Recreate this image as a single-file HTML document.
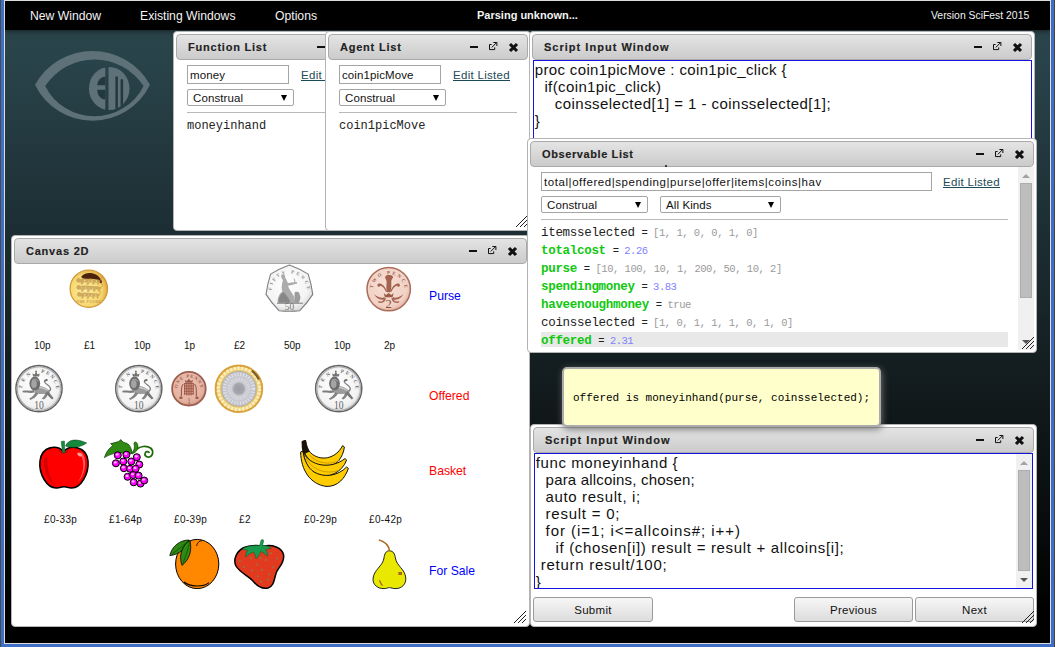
<!DOCTYPE html>
<html>
<head>
<meta charset="utf-8">
<title>JS-Eden</title>
<style>
*{box-sizing:border-box;margin:0;padding:0}
html,body{width:1059px;height:647px;overflow:hidden;background:#fff}
body{position:relative;font-family:"Liberation Sans",sans-serif;font-size:11.5px;color:#222}
#frame{position:absolute;left:0;top:0;width:1055px;height:647px;background:#3f6ec6;border-left:1px solid #4a4a4a;border-right:1px solid #444}
#frame i{position:absolute;left:3px;top:0;width:1047px;height:644px;background:#ddd}
#desk{position:absolute;left:5px;top:1px;width:1045px;height:642px;background:linear-gradient(#2a444a 0,#29434a 60px,#1c2e33 230px,#131c1e 380px,#050707 560px,#000 610px);overflow:hidden}
#menubar{position:absolute;left:0;top:0;width:1045px;height:29px;box-shadow:0 1px 5px rgba(0,0,0,.55);background:#000;color:#f2f2f2;font-size:12.2px}
#menubar span{position:absolute;top:8px;white-space:nowrap}
.win{position:absolute;background:#fff;border:1px solid #b4b4b4;border-radius:4px;overflow:hidden}
.tb{position:absolute;left:2px;top:2px;right:2px;height:26px;border:1px solid #aaa;border-radius:4px;background:linear-gradient(#e4e4e4,#cbcbcb)}
.tb b{position:absolute;left:11px;top:6px;font-size:11px;letter-spacing:.78px;color:#222;white-space:nowrap;-webkit-text-stroke:.15px #222}
.tb svg{position:absolute;top:0;right:0}
.inp{position:absolute;height:19px;border:1px solid #a5a5a5;background:#fff;font-size:11.5px;letter-spacing:.1px;padding:3px 0 0 2px;white-space:nowrap;overflow:hidden;color:#111}
.sel{position:absolute;height:17px;border:1px solid #a5a5a5;border-radius:2px;background:#fff;font-size:11.5px;letter-spacing:.1px;padding:2px 0 0 5px;white-space:nowrap;color:#111}
.sel:after{content:"";position:absolute;right:6px;top:5px;border:3.5px solid transparent;border-top:6px solid #000;border-bottom:0}
.lnk{position:absolute;font-size:11.5px;letter-spacing:.3px;color:#1b4a58;text-decoration:underline;white-space:nowrap}
.hr{position:absolute;height:1px;background:#b9b9b9}
.mono{font-family:"Liberation Mono",monospace}
.ta{position:absolute;border:1px solid #1414e0;background:#fff;font-size:15px;line-height:17px;white-space:pre;color:#111;overflow:hidden}
.ta div{height:17px}
.btn{position:absolute;height:25px;border:1px solid #9a9a9a;border-radius:3px;background:linear-gradient(#f7f7f7,#dcdcdc);font-size:11.5px;letter-spacing:.3px;text-align:center;padding-top:6px;color:#111}
#wins{position:absolute;left:0;top:0;width:1050px;height:643px;overflow:hidden}
#tip{position:absolute;left:562px;top:367px;width:319px;height:59.5px;background:#ffffcc;border:2px solid #ababab;border-radius:5px;box-shadow:1px 2px 7px #707070;font-size:11px;padding:23px 0 0 9px;color:#000;white-space:pre}
.grip{position:absolute;right:2px;bottom:2px}
.sb{position:absolute;width:16px;background:#f0f0f0}
.sb i{position:absolute;left:2px;width:12px;background:#bdbdbd;border:1px solid #adadad}
.sb:before{content:"";position:absolute;left:4px;top:7px;border:4px solid transparent;border-bottom:4px solid #a3a3a3;border-top:0}
.sb.dn:after{content:"";position:absolute;left:4px;bottom:6px;border:4px solid transparent;border-top:4px solid #555;border-bottom:0}
.row{position:absolute;left:13px;height:15px;font-family:"Liberation Mono",monospace;font-size:10.5px;letter-spacing:-.48px;white-space:pre;color:#222}
.row s,.row b{text-decoration:none;font-size:12.5px;letter-spacing:-.3px;margin-right:1px}
.row b{color:#0fc80f}
.row u{text-decoration:none;color:#9a9a9a}
.row u.n{color:#8080ff}
.cl{position:absolute;font-size:10px;color:#111;white-space:nowrap}
.cz{position:absolute;left:417px;font-size:12.2px;white-space:nowrap}
</style>
</head>
<body>
<svg width="0" height="0" style="position:absolute">
<defs>
<g id="tbi">
 <rect x="4" y="12" width="8" height="2" fill="#111"/>
 <path d="M25.6 10.5H23.5V15.6H28.7V13.4" fill="none" stroke="#111" stroke-width="1"/>
 <path d="M25.8 13.4L30.6 8.6M27.4 8.5H30.9V12" fill="none" stroke="#111" stroke-width="1"/>
 <path d="M44 10L51 17M51 10L44 17" stroke="#111" stroke-width="3.1" stroke-linecap="butt"/>
</g>
<g id="grip" shape-rendering="crispEdges">
 <path d="M0.5 12.5L12.5 0.5M4.5 12.5L12.5 4.5M8.5 12.5L12.5 8.5" stroke="#222" stroke-width="1"/>
</g>
</defs>
</svg>
<div id="frame"><i></i></div>
<div id="desk">
<svg id="logo" width="130" height="80" viewBox="30 46 130 80" style="position:absolute;left:25px;top:45px">
<defs><clipPath id="cpe"><ellipse cx="109.2" cy="88.5" rx="20.3" ry="21.6"/></clipPath></defs>
<path fill="#5e7178" fill-rule="evenodd" d="M35 84.8 A65.7 65.7 0 0 1 150 84.8 A64 64 0 0 1 35 84.8Z M45.2 85.9 A59 59 0 0 1 143.6 85.9 A55 55 0 0 1 45.2 85.9Z"/>
<g clip-path="url(#cpe)">
<rect x="86" y="64" width="19.3" height="50" fill="#5e7178"/>
<rect x="108.5" y="64" width="24" height="50" fill="#5e7178"/>
<path fill="#22393f" d="M105.3 76.7A8 8.6 0 0 0 97.2 85.3H105.3Z M105.3 89.7H97.2A8 9.9 0 0 0 105.3 99.6Z"/>
<rect x="115.4" y="76.5" width="2.5" height="40" fill="#22393f"/>
<rect x="120.6" y="79.3" width="2.5" height="40" fill="#22393f"/>
</g>
</svg>
 <div id="menubar">
  <span style="left:25px">New Window</span>
  <span style="left:135px">Existing Windows</span>
  <span style="left:270px">Options</span>
  <span style="left:472px;font-weight:bold;font-size:11px;top:8px">Parsing unknown...</span>
  <span style="left:926px;font-size:10.4px;top:9px">Version SciFest 2015</span>
 </div>
</div>
<div id="wins">
<!--W1 Function List-->
<div class="win" style="left:173px;top:31px;width:205px;height:200px">
 <div class="tb"><b>Function List</b><svg width="62" height="26" style="right:-1px;top:-1px"><use href="#tbi"/></svg></div>
 <div class="inp" style="left:13px;top:33px;width:102px">money</div>
 <div class="lnk" style="left:127px;top:37px">Edit Listed</div>
 <div class="sel" style="left:13px;top:57px;width:107px">Construal</div>
 <div class="hr" style="left:13px;top:80px;width:180px"></div>
 <div class="mono" style="position:absolute;left:13px;top:87px;font-size:12px">moneyinhand</div>
</div>
<!--W2 Agent List-->
<div class="win" style="left:325px;top:31px;width:206px;height:200px">
 <div class="tb"><b>Agent List</b><svg width="62" height="26" style="right:-1px;top:-1px"><use href="#tbi"/></svg></div>
 <div class="inp" style="left:13px;top:33px;width:102px">coin1picMove</div>
 <div class="lnk" style="left:127px;top:37px">Edit Listed</div>
 <div class="sel" style="left:13px;top:57px;width:107px">Construal</div>
 <div class="hr" style="left:13px;top:80px;width:178px"></div>
 <div class="mono" style="position:absolute;left:13px;top:87px;font-size:12px">coin1picMove</div>
 <svg class="grip" width="13" height="13"><use href="#grip"/></svg>
</div>
<!--W3 Script Input top-->
<div class="win" style="left:529px;top:31px;width:506px;height:130px">
 <div class="tb"><b style="letter-spacing:1.02px">Script Input Window</b><svg width="62" height="26" style="right:-1px;top:-1px"><use href="#tbi"/></svg></div>
 <div class="ta" style="left:3px;top:28px;width:499px;height:110px"><div style="padding-left:0.7px;letter-spacing:0.358px">proc coin1picMove : coin1pic_click {</div><div style="padding-left:10.4px;letter-spacing:0.386px">if(coin1pic_click)</div><div style="padding-left:20.8px;letter-spacing:0.454px">coinsselected[1] = 1 - coinsselected[1];</div><div style="padding-left:0.7px;letter-spacing:0.000px">}</div></div>
</div>
<!--W5 Canvas 2D-->
<div class="win" id="w5" style="left:11px;top:235px;width:519px;height:392px">
 <div class="tb"><b>Canvas 2D</b><svg width="62" height="26" style="right:-1px;top:-1px"><use href="#tbi"/></svg></div>
<svg id="cv" width="517" height="363" viewBox="12 263 517 363" style="position:absolute;left:0;top:27px">
<defs>
<radialGradient id="gSil" cx="45%" cy="42%" r="62%"><stop offset="0" stop-color="#ffffff"/><stop offset=".75" stop-color="#f3f3f3"/><stop offset="1" stop-color="#d6d6d6"/></radialGradient>
<radialGradient id="gCop1" cx="45%" cy="40%" r="65%"><stop offset="0" stop-color="#ecc3b3"/><stop offset=".75" stop-color="#e4b1a0"/><stop offset="1" stop-color="#cf917f"/></radialGradient>
<radialGradient id="gCop" cx="45%" cy="42%" r="62%"><stop offset="0" stop-color="#f7dfd4"/><stop offset=".78" stop-color="#f1d1c4"/><stop offset="1" stop-color="#dcab98"/></radialGradient>
<radialGradient id="gGold" cx="42%" cy="55%" r="60%"><stop offset="0" stop-color="#fdeea0"/><stop offset=".7" stop-color="#f7d870"/><stop offset="1" stop-color="#e0a63c"/></radialGradient>
<radialGradient id="gS2" cx="50%" cy="50%" r="50%"><stop offset="0" stop-color="#9c9ca4"/><stop offset=".3" stop-color="#a6a6ae"/><stop offset=".42" stop-color="#cfcfd6"/><stop offset="1" stop-color="#c0c0c8"/></radialGradient>
<path id="a185" d="M-17 1A17 17 0 0 1 17 1"/>
<path id="a135" d="M-11.6 .5A11.6 11.6 0 0 1 11.6 .5"/>
<path id="a175" d="M-16 1A16 16 0 0 1 16 1"/>
<path id="a190" d="M-17.8 2A17.8 17.8 0 0 1 17.8 2"/>
<!-- 10p -->
<g id="c10">
 <circle r="23.1" fill="url(#gSil)" stroke="#646464" stroke-width="1.5"/>
 <circle r="21.7" fill="none" stroke="#a9a9a9" stroke-width="1.4"/>
 <circle r="20.9" fill="none" stroke="#e2e2e2" stroke-width=".7"/>
 <text font-family="Liberation Serif" font-weight="bold" font-size="5" fill="#6e6e6e"><textPath href="#a185" startOffset="1" textLength="17" lengthAdjust="spacing">TEN</textPath></text><text font-family="Liberation Serif" font-weight="bold" font-size="5" fill="#6e6e6e"><textPath href="#a185" startOffset="28.5" textLength="24" lengthAdjust="spacing">PENCE</textPath></text>
 <!-- crown -->
 <path d="M-5.8 -12L-6.6 -15L-4.4 -14.2L-2.9 -17.3L-1.4 -14.2L0.8 -15L0 -12Z" fill="#727272"/>
 <circle cx="-2.9" cy="-17.2" r=".9" fill="#727272"/>
 <!-- body -->
 <path d="M-1 -2.6C3 -2.8 7 -1 10.4 2C11.6 3.6 10.6 5.4 8.6 5.2C5 4.6 1 6 -3.4 5C-5.6 4 -5 -1 -1 -2.6Z" fill="#9c9c9c"/>
 <path d="M0 -1C3 -1 6 0 8.6 2" fill="none" stroke="#dcdcdc" stroke-width="1"/>
 <!-- mane/head -->
 <ellipse cx="-4.2" cy="-5" rx="5.4" ry="7" fill="#6e6e6e"/>
 <ellipse cx="-5" cy="-4.6" rx="2.8" ry="4" fill="#a4a4a4"/>
 <path d="M-7 -8C-5 -10 -2 -9.6 -1 -7" fill="none" stroke="#bdbdbd" stroke-width=".8"/>
 <!-- legs -->
 <path d="M-5 1.4C-9 2.8 -12 1.6 -16.2 2.2L-16.6 3.6C-12 3.8 -9 4.8 -4.6 4Z" fill="#7c7c7c"/>
 <path d="M-3.4 3.6C-5 6.6 -7 8.6 -9.8 10L-8.6 11.4C-5.4 10.2 -2.4 8 -0.6 5Z" fill="#828282"/>
 <path d="M6.4 4C6 6.6 4.6 8.4 2.8 10L4.6 11C6.8 9.6 8.6 7.4 9.2 4.8Z" fill="#828282"/>
 <path d="M8.6 2.4C11 4.6 12.6 7 14.6 9.6L13 10.8C10.6 8.6 8.6 6.6 7 4.8Z" fill="#767676"/>
 <!-- tail -->
 <path d="M10.2 2.6C13.4 0.4 10.4 -2.6 7.8 -4.4C5.8 -5.8 5 -7.2 5.8 -8" fill="none" stroke="#7a7a7a" stroke-width="1.2"/>
 <ellipse cx="7" cy="-8.3" rx="1.9" ry="1.1" fill="#6c6c6c" transform="rotate(-15 7 -8.3)"/>
 <text y="20.6" text-anchor="middle" font-family="Liberation Serif" font-size="12.3" fill="#646464" textLength="9.6" lengthAdjust="spacingAndGlyphs">10</text>
</g>
<!-- 1p -->
<g id="c1">
 <circle r="16.8" fill="url(#gCop1)" stroke="#9c5e50" stroke-width="1.8"/>
 <text font-family="Liberation Serif" font-weight="bold" font-size="4.6" fill="#9c5e50"><textPath href="#a135" startOffset="1" textLength="34" lengthAdjust="spacing">ONE PENNY</textPath></text>
 <path d="M-3.5 -6L-4 -8.6L-2 -7.6L0 -10L2 -7.6L4 -8.6L3.5 -6Z" fill="#9c5c4c"/>
 <rect x="-4.6" y="-5.6" width="9.2" height="11.4" fill="#d89c8a"/>
 <path d="M-4.4 -5.5V6M-2.2 -5.5V6.8M0 -5.5V7M2.2 -5.5V6.8M4.4 -5.5V6M-4.6 -5.2H4.6M-4.6 -2.6H4.6M-4.6 0H4.6M-4.6 2.6H4.6M-4.6 5.2H4.6" stroke="#9a5848" stroke-width=".9" fill="none"/>
 <path d="M-5.5 -4.5C-8.5 -3 -7 4 -7.6 7.5M5.5 -4.5C8.5 -3 7 4 7.6 7.5" stroke="#9a5848" stroke-width="1.1" fill="none"/>
 <ellipse cx="-8" cy="9" rx="1.7" ry="1.2" fill="#9a5848"/><ellipse cx="8" cy="9" rx="1.7" ry="1.2" fill="#9a5848"/>
 <text y="15" text-anchor="middle" font-family="Liberation Serif" font-size="8" fill="#a06454">1</text>
</g>
<!-- 2p -->
<g id="c2">
 <circle r="21.7" fill="url(#gCop)" stroke="#aa6b5b" stroke-width="1.5"/>
 <text font-family="Liberation Serif" font-weight="bold" font-size="4.8" fill="#9c5e50"><textPath href="#a175" startOffset="2" textLength="46" lengthAdjust="spacing">TWO PENCE</textPath></text>
 <!-- centre plume -->
 <path d="M-3.4 -12.5C-2 -14.5 3.5 -14.5 4.3 -12.3C4.6 -10.8 2.8 -10 2.6 -8C2.4 -4 3.2 0 1.6 3.2H-1.6C-3 0 -1.8 -5 -2.2 -8C-2.4 -10 -4.2 -10.8 -3.4 -12.5Z" fill="#a36350"/>
 <!-- side plumes -->
 <path d="M-1.6 2.5C-3 -1 -5 -4.6 -8.6 -5.6C-11.6 -6.2 -12.2 -3 -10 -2.4C-8.6 -2.2 -8.4 -3.6 -7.4 -3.2C-4.8 -2 -3.6 0.6 -2.6 3Z" fill="#a36350"/>
 <path d="M1.6 2.5C3 -1 5 -4.6 8.6 -5.6C11.6 -6.2 12.2 -3 10 -2.4C8.6 -2.2 8.4 -3.6 7.4 -3.2C4.8 -2 3.6 0.6 2.6 3Z" fill="#a36350"/>
 <!-- crown band -->
 <path d="M-5 4L-3.8 8.2H3.8L5 4L2.6 5.8L0 3.8L-2.6 5.8Z" fill="#9a5a48"/>
 <!-- ribbons -->
 <path d="M-4 8C-7 9.5 -11 8 -14.6 5.2C-13 8.6 -9 11.5 -4.4 10.4Z" fill="#a36350"/>
 <path d="M4 8C7 9.5 11 8 14.6 5.2C13 8.6 9 11.5 4.4 10.4Z" fill="#a36350"/>
 <path d="M-3.4 9C-4 12 -7 14.4 -10.4 12.6M3.4 9C4 12 7 14.4 10.4 12.6" stroke="#a36350" stroke-width="1.5" fill="none"/>
 <text y="19.4" text-anchor="middle" font-family="Liberation Serif" font-size="12.6" fill="#8e4e3c">2</text>
</g>
<!-- gold £1 -->
<g id="cg1">
 <circle r="18.7" fill="url(#gGold)" stroke="#cf9636" stroke-width="1.2"/>
 <path d="M-7 -12.6C-2.5 -17.6 8.6 -16.6 12.8 -8.2C13.6 -6 12.6 -4.6 11.4 -5.8C8.8 -9.4 4 -10.6 -0.6 -9.8C-4.4 -9.2 -8.6 -10.6 -7 -12.6Z" fill="#4d230c"/>
 <defs><g id="ln"><path d="M-9.5 -1.2C-6 -2.4 -2 -2.2 2 -1.6C5 -1.2 8 -1.6 9.6 -0.6C10.6 0.4 9.6 1.4 8 1.2C5 0.8 2 1.4 -2 1.2C-5 1 -8 1.6 -9.5 0.8Z"/><circle cx="-9.6" cy="-0.6" r="1.9"/><path d="M-7 1L-7.6 2.8H-5.8L-5 1ZM-2 1.2L-2.4 2.9H-0.6L0 1.2ZM3 1L2.8 2.8H4.6L5 1ZM7 1L7.2 2.8H9L8.6 1Z"/><path d="M9.4 -0.6C11.4 -1.6 11.6 -3 10 -3.2" fill="none" stroke="#c59a50" stroke-width=".8"/></g></defs>
 <g fill="#c9a056" opacity=".85">
  <use href="#ln" transform="translate(0.4 -7.6) scale(1.12 1.25)"/><use href="#ln" transform="translate(1 -0.6) scale(1.16 1.25)"/><use href="#ln" transform="translate(0.4 6.4) scale(1.05 1.25)"/>
 </g>
 <g fill="#fbe99c" opacity=".9"><circle cx="-4" cy="-8" r=".7"/><circle cx="3" cy="-7.6" r=".7"/><circle cx="-3" cy="-0.8" r=".7"/><circle cx="4" cy="-0.6" r=".7"/><circle cx="-4" cy="6.2" r=".7"/><circle cx="3" cy="6.4" r=".7"/><circle cx="7.6" cy="-7.8" r=".6"/><circle cx="-7" cy="-0.8" r=".6"/><circle cx="7" cy="6.2" r=".6"/><circle cx="0" cy="-7.8" r=".5"/><circle cx="0.6" cy="-0.6" r=".5"/><circle cx="-0.4" cy="6.3" r=".5"/></g>
 <text font-family="Liberation Sans" font-weight="bold" font-size="3.4" fill="#caa050" text-anchor="middle" y="14.8" letter-spacing=".5">ONE POUND</text>
</g>
<!-- £2 -->
<g id="cp2">
 <circle r="23.2" fill="#f0d68a" stroke="#d9a23e" stroke-width="2.2"/>
 <circle r="20.6" fill="none" stroke="#fbefb8" stroke-width="3.4" stroke-dasharray="2.2 1.6"/>
 <circle r="18.2" fill="none" stroke="#e6c36a" stroke-width="1.2"/>
 <path d="M13.6 -18.8A23.2 23.2 0 0 1 21 -9.8L19 -8.8A21 21 0 0 0 12.4 -17Z" fill="#7a5c26"/>
 <circle r="17.3" fill="url(#gS2)"/>
 <circle r="14.6" fill="none" stroke="#e4e4ea" stroke-width="3.6" stroke-dasharray="1.4 1.5" opacity=".8"/>
 <circle r="10" fill="none" stroke="#dcdce4" stroke-width="2.6" stroke-dasharray="1.2 1.4" opacity=".8"/>
 <circle r="17.3" fill="none" stroke="#a8a8b0" stroke-width=".8"/>
</g>
<!-- 50p -->
<g id="c50">
 <path d="M0.0 -24.0Q9.8 -20.4 18.8 -15.0Q22.0 -5.0 23.4 5.3Q17.7 14.1 10.4 21.6Q0.0 22.6 -10.4 21.6Q-17.7 14.1 -23.4 5.3Q-22.0 -5.0 -18.8 -15.0Q-9.8 -20.4 -0.0 -24.0Z" fill="url(#gSil)" stroke="#7e7e7e" stroke-width="1.1" stroke-linejoin="round"/>
 <text font-family="Liberation Serif" font-weight="bold" font-size="4.6" fill="#858585"><textPath href="#a190" startOffset="1" textLength="53" lengthAdjust="spacing">FIFTY PENCE</textPath></text>
 <!-- Britannia -->
 <path d="M-8 -14.4C-5.6 -16 -3.4 -13.6 -4.4 -11.6C-2 -9 -2.6 -6.6 -1 -6C2 -6.4 5 -7.6 7.6 -7L7.8 -5.6C5 -5 2 -3.6 -1.4 -3.4C-0.6 0 3 4 5 8L6 13.6H-11.6C-12.4 9 -10 4.6 -7 2.4C-8.4 -1 -7.6 -5 -6.4 -9C-7.6 -10.6 -8.8 -12.6 -8 -14.4Z" fill="#ababab"/>
 <path d="M-6 3C-3 6 0 10 1 13.4H-10.8C-11 9 -9 5 -6 3Z" fill="#878787"/>
 <path d="M5.4 3.2C7.6 2 10.6 3 10.2 5.6C12 8 10.4 11.4 9.4 13.6H5.6C6 10 4.4 6 5.4 3.2Z" fill="#9c9c9c"/>
 <path d="M4.6 -10.6L5.8 -6.6" stroke="#aaa" stroke-width="1"/>
 <path d="M-12.4 14.1H13.4" stroke="#6a6a6a" stroke-width=".9"/>
 <text y="21.3" text-anchor="middle" font-family="Liberation Serif" font-size="9.4" fill="#747474">50</text>
</g>
</defs>
<!-- purse row -->
<use href="#cg1" x="88.8" y="288.7"/>
<use href="#c50" x="289.4" y="289.1"/>
<use href="#c2" x="388.7" y="289.1"/>
<!-- offered row -->
<use href="#c10" x="39" y="388.6"/>
<use href="#c10" x="138.8" y="388.6"/>
<use href="#c1" x="188.9" y="388.7"/>
<use href="#cp2" x="238.9" y="388.8"/>
<use href="#c10" x="338.7" y="388.6"/>

<!-- apple -->
<g>
 <path d="M63.6 451.5C57 444.6 42 445.6 40 461C38.6 474 47 488.4 56.6 488C60.4 487.8 61.6 486.6 64 486.8C66.4 486.6 68 488 71.6 488C81 488 89 474 88 461C86.6 446 70.6 444.4 63.6 451.5Z" fill="#f00" stroke="#000" stroke-width="1.6"/>
 <path d="M44 458C43 470 48 482 56 485.6C50 479 46.6 469 47.4 456.4Z" fill="#d40000"/>
 <path d="M79 453C84.6 458 85 472 78 482C86 474 87.4 458 81.6 452.4Z" fill="#ff5a5a"/>
 <ellipse cx="79.6" cy="454.6" rx="2.6" ry="1.6" fill="#ff9a9a" transform="rotate(35 79.6 454.6)"/>
 <path d="M58.6 450.4C61.4 453.6 66 453.6 68.4 450.6" fill="none" stroke="#b00000" stroke-width="1.2"/>
 <path d="M61.2 441.4L64.4 441L65 452.6L62.6 452.8Z" fill="#168a3c" stroke="#0a5a24" stroke-width=".5"/>
 <path d="M65.6 446C68 439.6 76 438 86.6 443C80 447.6 72 448.4 65.6 446Z" fill="#168a3c" stroke="#0a4a1c" stroke-width=".6"/>
</g>
<!-- grapes -->
<g>
 <path d="M104.4 457.6C107 450 110 448 112.6 445.6L110.6 443.6C114 443 116 442.4 118.6 441.6L121 439.6C122 442 124 442.6 127 443.4C130 445 132 449 131.6 453L127 456C123 451.6 117 452.4 113.6 453.6C110 454.6 107 456 104.4 457.6Z" fill="#2e8a12" stroke="#0a3a04" stroke-width=".7"/>
 <path d="M132 454C137 452 139.6 448 137 443C135.6 441 133.6 442 134 444C135 448 134 451 131 453Z" fill="#2e8a12" stroke="#0a3a04" stroke-width=".6"/>
 <path d="M137 449C140 446.6 146 445 150.6 448C154 451 153 456 149.4 457C146 457.6 144 455 145.4 452.6C146.6 451 149 451.4 149.4 453" fill="none" stroke="#1e6a0a" stroke-width="1.7"/>
 <circle cx="117.8" cy="455.3" r="3.5" fill="#f0f" stroke="#000" stroke-width="1"/><ellipse cx="117.2" cy="454.4" rx="1.5" ry="1.2" fill="#ffb0ff"/><circle cx="126.4" cy="454.7" r="3.5" fill="#f0f" stroke="#000" stroke-width="1"/><ellipse cx="125.8" cy="453.8" rx="1.5" ry="1.2" fill="#ffb0ff"/><circle cx="136.8" cy="457.2" r="3.5" fill="#f0f" stroke="#000" stroke-width="1"/><ellipse cx="136.2" cy="456.3" rx="1.5" ry="1.2" fill="#ffb0ff"/><circle cx="115.9" cy="463.3" r="3.5" fill="#f0f" stroke="#000" stroke-width="1"/><ellipse cx="115.3" cy="462.4" rx="1.5" ry="1.2" fill="#ffb0ff"/><circle cx="123.3" cy="461.5" r="3.5" fill="#f0f" stroke="#000" stroke-width="1"/><ellipse cx="122.7" cy="460.6" rx="1.5" ry="1.2" fill="#ffb0ff"/><circle cx="131.3" cy="461.5" r="3.5" fill="#f0f" stroke="#000" stroke-width="1"/><ellipse cx="130.7" cy="460.6" rx="1.5" ry="1.2" fill="#ffb0ff"/><circle cx="139.3" cy="464.5" r="3.5" fill="#f0f" stroke="#000" stroke-width="1"/><ellipse cx="138.7" cy="463.6" rx="1.5" ry="1.2" fill="#ffb0ff"/><circle cx="123.9" cy="468.2" r="3.5" fill="#f0f" stroke="#000" stroke-width="1"/><ellipse cx="123.3" cy="467.3" rx="1.5" ry="1.2" fill="#ffb0ff"/><circle cx="130.0" cy="468.8" r="3.5" fill="#f0f" stroke="#000" stroke-width="1"/><ellipse cx="129.4" cy="467.9" rx="1.5" ry="1.2" fill="#ffb0ff"/><circle cx="135.6" cy="468.8" r="3.5" fill="#f0f" stroke="#000" stroke-width="1"/><ellipse cx="135.0" cy="467.9" rx="1.5" ry="1.2" fill="#ffb0ff"/><circle cx="127.6" cy="476.8" r="3.5" fill="#f0f" stroke="#000" stroke-width="1"/><ellipse cx="127.0" cy="475.9" rx="1.5" ry="1.2" fill="#ffb0ff"/><circle cx="133.1" cy="475.0" r="3.5" fill="#f0f" stroke="#000" stroke-width="1"/><ellipse cx="132.5" cy="474.1" rx="1.5" ry="1.2" fill="#ffb0ff"/><circle cx="138.6" cy="475.6" r="3.5" fill="#f0f" stroke="#000" stroke-width="1"/><ellipse cx="138.0" cy="474.7" rx="1.5" ry="1.2" fill="#ffb0ff"/><circle cx="133.7" cy="482.3" r="3.5" fill="#f0f" stroke="#000" stroke-width="1"/><ellipse cx="133.1" cy="481.4" rx="1.5" ry="1.2" fill="#ffb0ff"/><circle cx="140.5" cy="483.6" r="3.5" fill="#f0f" stroke="#000" stroke-width="1"/><ellipse cx="139.9" cy="482.7" rx="1.5" ry="1.2" fill="#ffb0ff"/><circle cx="144.2" cy="480.5" r="3.5" fill="#f0f" stroke="#000" stroke-width="1"/><ellipse cx="143.6" cy="479.6" rx="1.5" ry="1.2" fill="#ffb0ff"/>
</g>
<!-- banana -->
<g stroke="#111" stroke-width="1" fill="#fc0">
 <path d="M302 441.6L305.6 440.4C306.4 446 308 450 310.4 452.6C320 462 336 459 342.6 445.6L344.4 447C343 458 336 466 326 468C316 468 308 460 304 452Z"/>
 <path d="M303 452C310 466 330 470 345 458.6L346.6 460C342 473 328 478 318 476C310 473 305 464 303 452Z"/>
 <path d="M300.6 452C301 470 310 484 326 486.4C338 487 345 478 348.4 468.4L346.6 467C338 476 324 478 314 472C308 468 304 460 303 451Z"/>
 <path d="M302 441L305.8 440C306.6 445 307.6 448.6 309.6 451.6L303.4 454.6C301.6 450 301.4 445 302 441Z" fill="#1a1208" stroke="none"/>
</g>
<path d="M306 458C312 470 326 474.6 338 470.6M309 454.6C316 463 330 466 340 460" fill="none" stroke="#c89600" stroke-width=".9"/>
<!-- orange -->
<g>
 <ellipse cx="197.2" cy="564" rx="21.6" ry="24.6" fill="#f80" stroke="#000" stroke-width="1"/>
 <path d="M184 582C190 587 203 587.4 209 582.6" fill="none" stroke="#000" stroke-width="1.2"/>
 <path d="M196.6 546C197 543 199 541 202 540.6" fill="none" stroke="#000" stroke-width=".8"/>
 <path d="M169.8 555.6C172 546 180 540 189 540C186 548 180 554.6 169.8 555.6Z" fill="#2e8a12" stroke="#000" stroke-width=".8"/>
 <path d="M182 565.4C178 555 183 544 190 540.6C192 550 190 559 182 565.4Z" fill="#2e8a12" stroke="#000" stroke-width=".8"/>
 <path d="M172 554C178 550 183 546 187 541.6M183 563C186 556 188 549 189.6 542.6" fill="none" stroke="#0a3a04" stroke-width=".6"/>
</g>
<!-- strawberry -->
<g>
 <path d="M243 548C236 552 233 560 236 566C240 573 249 576 253 581C257 586 262 589.4 268 588C275 586 274 577 277 571C280 566 284.6 562 283.6 555C282 547 272 544.6 264 546C256 545 249 545 243 548Z" fill="#e23a1e" stroke="#000" stroke-width="1.5"/>
 <path d="M242.4 549C247 545.6 254 545.4 259.6 545.6L261 540.4C261.4 539 264 539.4 263.6 541L262.6 545.6C266 545 270 546.6 271.4 548.6C268.6 548.6 267 549 265.6 549.6C267.4 552 267.6 554 267 556.4C265 554 263 552 260.6 551.6C260 554 258 557 256 559C255.6 556 255 553.6 253.4 552C251 553 248 554.6 245.6 557C245.6 554 246.4 552 247.6 550.4C245.6 550 244 549.6 242.4 549Z" fill="#1a9a4c" stroke="#0a5a2a" stroke-width=".5"/>
 <g fill="#8a7850"><circle cx="239.8" cy="561" r="1"/><circle cx="251" cy="558" r="1"/><circle cx="260.6" cy="558" r="1"/><circle cx="266" cy="560" r="1"/><circle cx="271" cy="553" r="1"/><circle cx="277.2" cy="558.4" r="1"/><circle cx="244" cy="567" r="1"/><circle cx="256.6" cy="564.6" r="1"/><circle cx="273.4" cy="567" r="1"/><circle cx="252" cy="570.6" r="1"/><circle cx="262" cy="570" r="1"/><circle cx="269" cy="574.4" r="1"/><circle cx="257.8" cy="576.2" r="1"/><circle cx="268" cy="579.6" r="1"/><circle cx="261.2" cy="581.4" r="1"/></g>
</g>
<!-- pear -->
<g>
 <path d="M389.6 550.8C386 550.6 384.4 554 384 558C383 566 373.4 570 373 579C372.8 585 378 588.8 384 588.6C386.6 588.6 388 587.6 389.6 587.6C391 587.6 393 588.8 396 588.6C402 588.4 406.2 584 405.8 578C405 569 396.6 566 395.4 558C394.8 554 393.4 551 389.6 550.8Z" fill="#e8e800" stroke="#222" stroke-width="1"/>
 <path d="M389.6 550.8C389 546 385 541.6 378.8 539.8" fill="none" stroke="#a8621c" stroke-width="1.3"/>
 <rect x="398.4" y="572" width="3.6" height="3" fill="#a8621c"/>
 <path d="M379.4 580.4L380.6 582.4L381 584L382.6 585.6" fill="none" stroke="#a8621c" stroke-width="1.3"/>
</g>

</svg>

<div class="cl" style="left:22px;top:104px">10p</div>
<div class="cl" style="left:72px;top:104px">£1</div>
<div class="cl" style="left:122px;top:104px">10p</div>
<div class="cl" style="left:172px;top:104px">1p</div>
<div class="cl" style="left:222px;top:104px">£2</div>
<div class="cl" style="left:272px;top:104px">50p</div>
<div class="cl" style="left:322px;top:104px">10p</div>
<div class="cl" style="left:372px;top:104px">2p</div>
<div class="cl" style="left:32px;top:278px;letter-spacing:.35px">£0-33p</div>
<div class="cl" style="left:97px;top:278px;letter-spacing:.35px">£1-64p</div>
<div class="cl" style="left:162px;top:278px;letter-spacing:.35px">£0-39p</div>
<div class="cl" style="left:227px;top:278px;letter-spacing:.35px">£2</div>
<div class="cl" style="left:292px;top:278px;letter-spacing:.35px">£0-29p</div>
<div class="cl" style="left:357px;top:278px;letter-spacing:.35px">£0-42p</div>
<div class="cz" style="top:53px;color:#00f">Purse</div>
<div class="cz" style="top:153px;color:#f00">Offered</div>
<div class="cz" style="top:228px;color:#f00">Basket</div>
<div class="cz" style="top:328px;color:#00f">For Sale</div>
<svg class="grip" width="13" height="13" style="right:3px"><use href="#grip"/></svg>
</div>
<!--W4 Observable List-->
<div class="win" style="left:527px;top:138px;width:510px;height:215px">
 <div class="tb"><b style="letter-spacing:.6px">Observable List</b><svg width="62" height="26" style="right:-1px;top:-1px"><use href="#tbi"/></svg></div>
 <div class="inp" style="left:13px;top:33px;width:391px;letter-spacing:.57px">total|offered|spending|purse|offer|items|coins|hav</div>
 <div class="lnk" style="left:415px;top:37px">Edit Listed</div>
 <div class="sel" style="left:13px;top:57px;width:107px">Construal</div>
 <div class="sel" style="left:132px;top:57px;width:121px">All Kinds</div>
 <div class="hr" style="left:13px;top:80px;width:467px"></div>
 <div class="row" style="top:87px"><s>itemsselected</s> = <u>[1, 1, 0, 0, 1, 0]</u></div>
 <div class="row" style="top:105px"><b>totalcost</b> = <u class="n">2.26</u></div>
 <div class="row" style="top:123px"><b>purse</b> = <u>[10, 100, 10, 1, 200, 50, 10, 2]</u></div>
 <div class="row" style="top:141px"><b>spendingmoney</b> = <u class="n">3.83</u></div>
 <div class="row" style="top:159px"><b>haveenoughmoney</b> = <u>true</u></div>
 <div class="row" style="top:177px"><s>coinsselected</s> = <u>[1, 0, 1, 1, 1, 0, 1, 0]</u></div>
 <div class="row" style="top:193px;width:467px;background:#e8e8e8;padding-top:2px"><b>offered</b> = <u class="n">2.31</u></div>
 <div class="sb dn" style="left:490px;top:28px;height:183px"><i style="top:16px;height:115px"></i></div>
 <svg class="grip" width="13" height="13"><use href="#grip"/></svg>
</div>
<!--W6 Script Input bottom-->
<div class="win" style="left:530px;top:424px;width:507px;height:203px">
 <div class="tb"><b style="letter-spacing:1.02px">Script Input Window</b><svg width="62" height="26" style="right:-1px;top:-1px"><use href="#tbi"/></svg></div>
 <div class="ta" style="left:3px;top:28px;width:499px;height:136px"><div style="padding-left:0.8px;letter-spacing:0.591px">func moneyinhand {</div><div style="padding-left:10.6px;letter-spacing:0.191px">para allcoins, chosen;</div><div style="padding-left:10.6px;letter-spacing:0.614px">auto result, i;</div><div style="padding-left:10.6px;letter-spacing:0.753px">result = 0;</div><div style="padding-left:10.6px;letter-spacing:0.944px">for (i=1; i&lt;=allcoins#; i++)</div><div style="padding-left:20.5px;letter-spacing:0.659px">if (chosen[i]) result = result + allcoins[i];</div><div style="padding-left:5.8px;letter-spacing:0.731px">return result/100;</div><div style="padding-left:0.8px;letter-spacing:0.000px">}</div></div>
 <div class="btn" style="left:2px;top:172px;width:120px">Submit</div>
 <div class="btn" style="left:263px;top:172px;width:119px">Previous</div>
 <div class="btn" style="left:384px;top:172px;width:119px">Next</div>
 <div class="sb dn" style="left:485px;top:29px;height:134px"><i style="top:16px;height:101px"></i></div>
 <svg class="grip" width="13" height="13"><use href="#grip"/></svg>
</div>
<div style="position:absolute;left:665px;top:165px;width:2px;height:2px;background:#111;border-radius:1px"></div>
<!--tooltip-->
<div id="tip" class="mono">offered is moneyinhand(purse, coinsselected);</div>
</div>
</body>
</html>
